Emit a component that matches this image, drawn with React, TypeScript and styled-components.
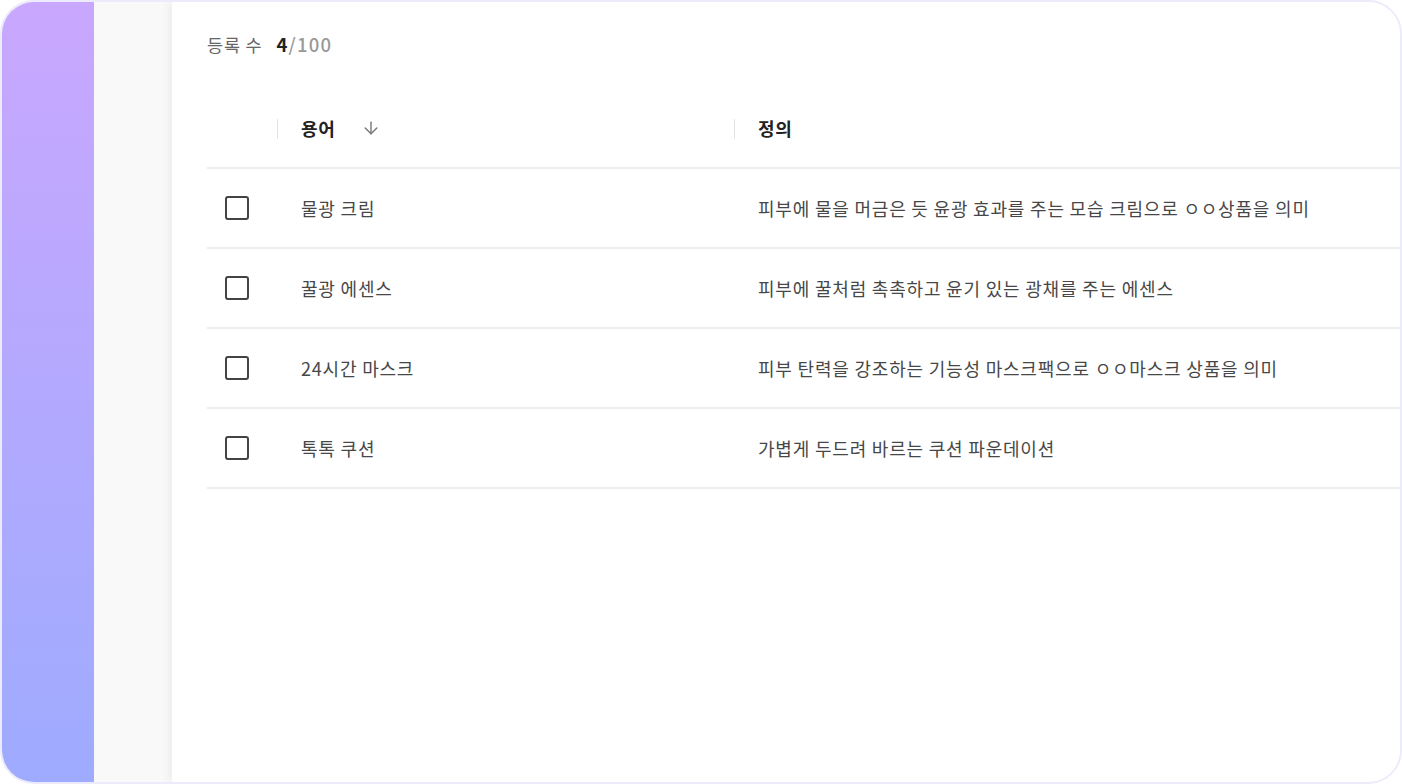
import React from "react";
import styled, { createGlobalStyle } from "styled-components";
import { ArrowDown } from "lucide-react";

const GlobalStyle = createGlobalStyle`
  html, body {
    margin: 0;
    padding: 0;
    background: #ffffff;
  }
  body {
    font-family: "Noto Sans CJK KR", "Noto Sans", sans-serif;
  }
`;

const Frame = styled.div`
  box-sizing: border-box;
  width: 1402px;
  height: 784px;
  border: 2px solid #ebebfb;
  border-radius: 34px;
  overflow: hidden;
  display: flex;
  background: #ffffff;
`;

const Rail = styled.div`
  width: 92px;
  flex-shrink: 0;
  background: linear-gradient(180deg, #c9a7fe 0%, #b3a9fe 50%, #9eabfe 100%);
`;

const SubPanel = styled.div`
  width: 78px;
  flex-shrink: 0;
  background: #f9f9f9;
`;

const Main = styled.main`
  flex: 1;
  min-width: 0;
  background: #ffffff;
  box-shadow: -3px 0 10px rgba(0, 0, 0, 0.06);
  padding: 30px 0 0 35px;
  position: relative;
`;

const CountLine = styled.div`
  display: flex;
  align-items: baseline;
  gap: 14px;
  height: 24px;
  font-size: 17.5px;
  line-height: 24px;
  color: #666666;
  letter-spacing: 0.8px;
`;

const CountValue = styled.span`
  color: #999999;
  font-size: 18.5px;
  font-weight: 500;
  letter-spacing: 1.2px;

  b {
    color: #222222;
    font-weight: 700;
  }
`;

const Table = styled.div`
  margin-top: 33px;
  display: grid;
  grid-template-columns: 70px 457px 1fr;
`;

const Row = styled.div`
  display: contents;
`;

const Cell = styled.div<{ $head?: boolean }>`
  height: 80px;
  box-sizing: border-box;
  display: flex;
  align-items: center;
  padding-left: 24px;
  border-bottom: 2px solid #eeeeee;
  font-size: 18px;
  letter-spacing: 0.8px;
  color: ${(p) => (p.$head ? "#222222" : "#474747")};
  font-weight: ${(p) => (p.$head ? 700 : 400)};
  position: relative;
  white-space: nowrap;

  ${(p) =>
    p.$head &&
    `
    &::before {
      content: "";
      position: absolute;
      left: 0;
      top: 30px;
      width: 1px;
      height: 20px;
      background: #e3e3e3;
    }
  `}
`;

const CheckCell = styled.div`
  height: 80px;
  box-sizing: border-box;
  display: flex;
  align-items: center;
  padding-left: 18px;
  border-bottom: 2px solid #eeeeee;
`;

const Box = styled.span`
  width: 24px;
  height: 24px;
  box-sizing: border-box;
  border: 2px solid #444444;
  border-radius: 3px;
  background: #ffffff;
`;

const SortIcon = styled(ArrowDown)`
  margin-left: 25px;
  color: #777777;
`;

const rows = [
  {
    term: "물광 크림",
    def: "피부에 물을 머금은 듯 윤광 효과를 주는 모습 크림으로 ㅇㅇ상품을 의미",
  },
  { term: "꿀광 에센스", def: "피부에 꿀처럼 촉촉하고 윤기 있는 광채를 주는 에센스" },
  {
    term: "24시간 마스크",
    def: "피부 탄력을 강조하는 기능성 마스크팩으로 ㅇㅇ마스크 상품을 의미",
  },
  { term: "톡톡 쿠션", def: "가볍게 두드려 바르는 쿠션 파운데이션" },
];

export default function App() {
  return (
    <>
      <GlobalStyle />
      <Frame>
        <Rail />
        <SubPanel />
        <Main>
          <CountLine>
            <span>등록 수</span>
            <CountValue>
              <b>4</b>/100
            </CountValue>
          </CountLine>
          <Table>
            <Row>
              <CheckCell />
              <Cell $head>
                용어
                <SortIcon size={20} strokeWidth={1.7} />
              </Cell>
              <Cell $head>정의</Cell>
            </Row>
            {rows.map((r) => (
              <Row key={r.term}>
                <CheckCell>
                  <Box />
                </CheckCell>
                <Cell>{r.term}</Cell>
                <Cell>{r.def}</Cell>
              </Row>
            ))}
          </Table>
        </Main>
      </Frame>
    </>
  );
}
